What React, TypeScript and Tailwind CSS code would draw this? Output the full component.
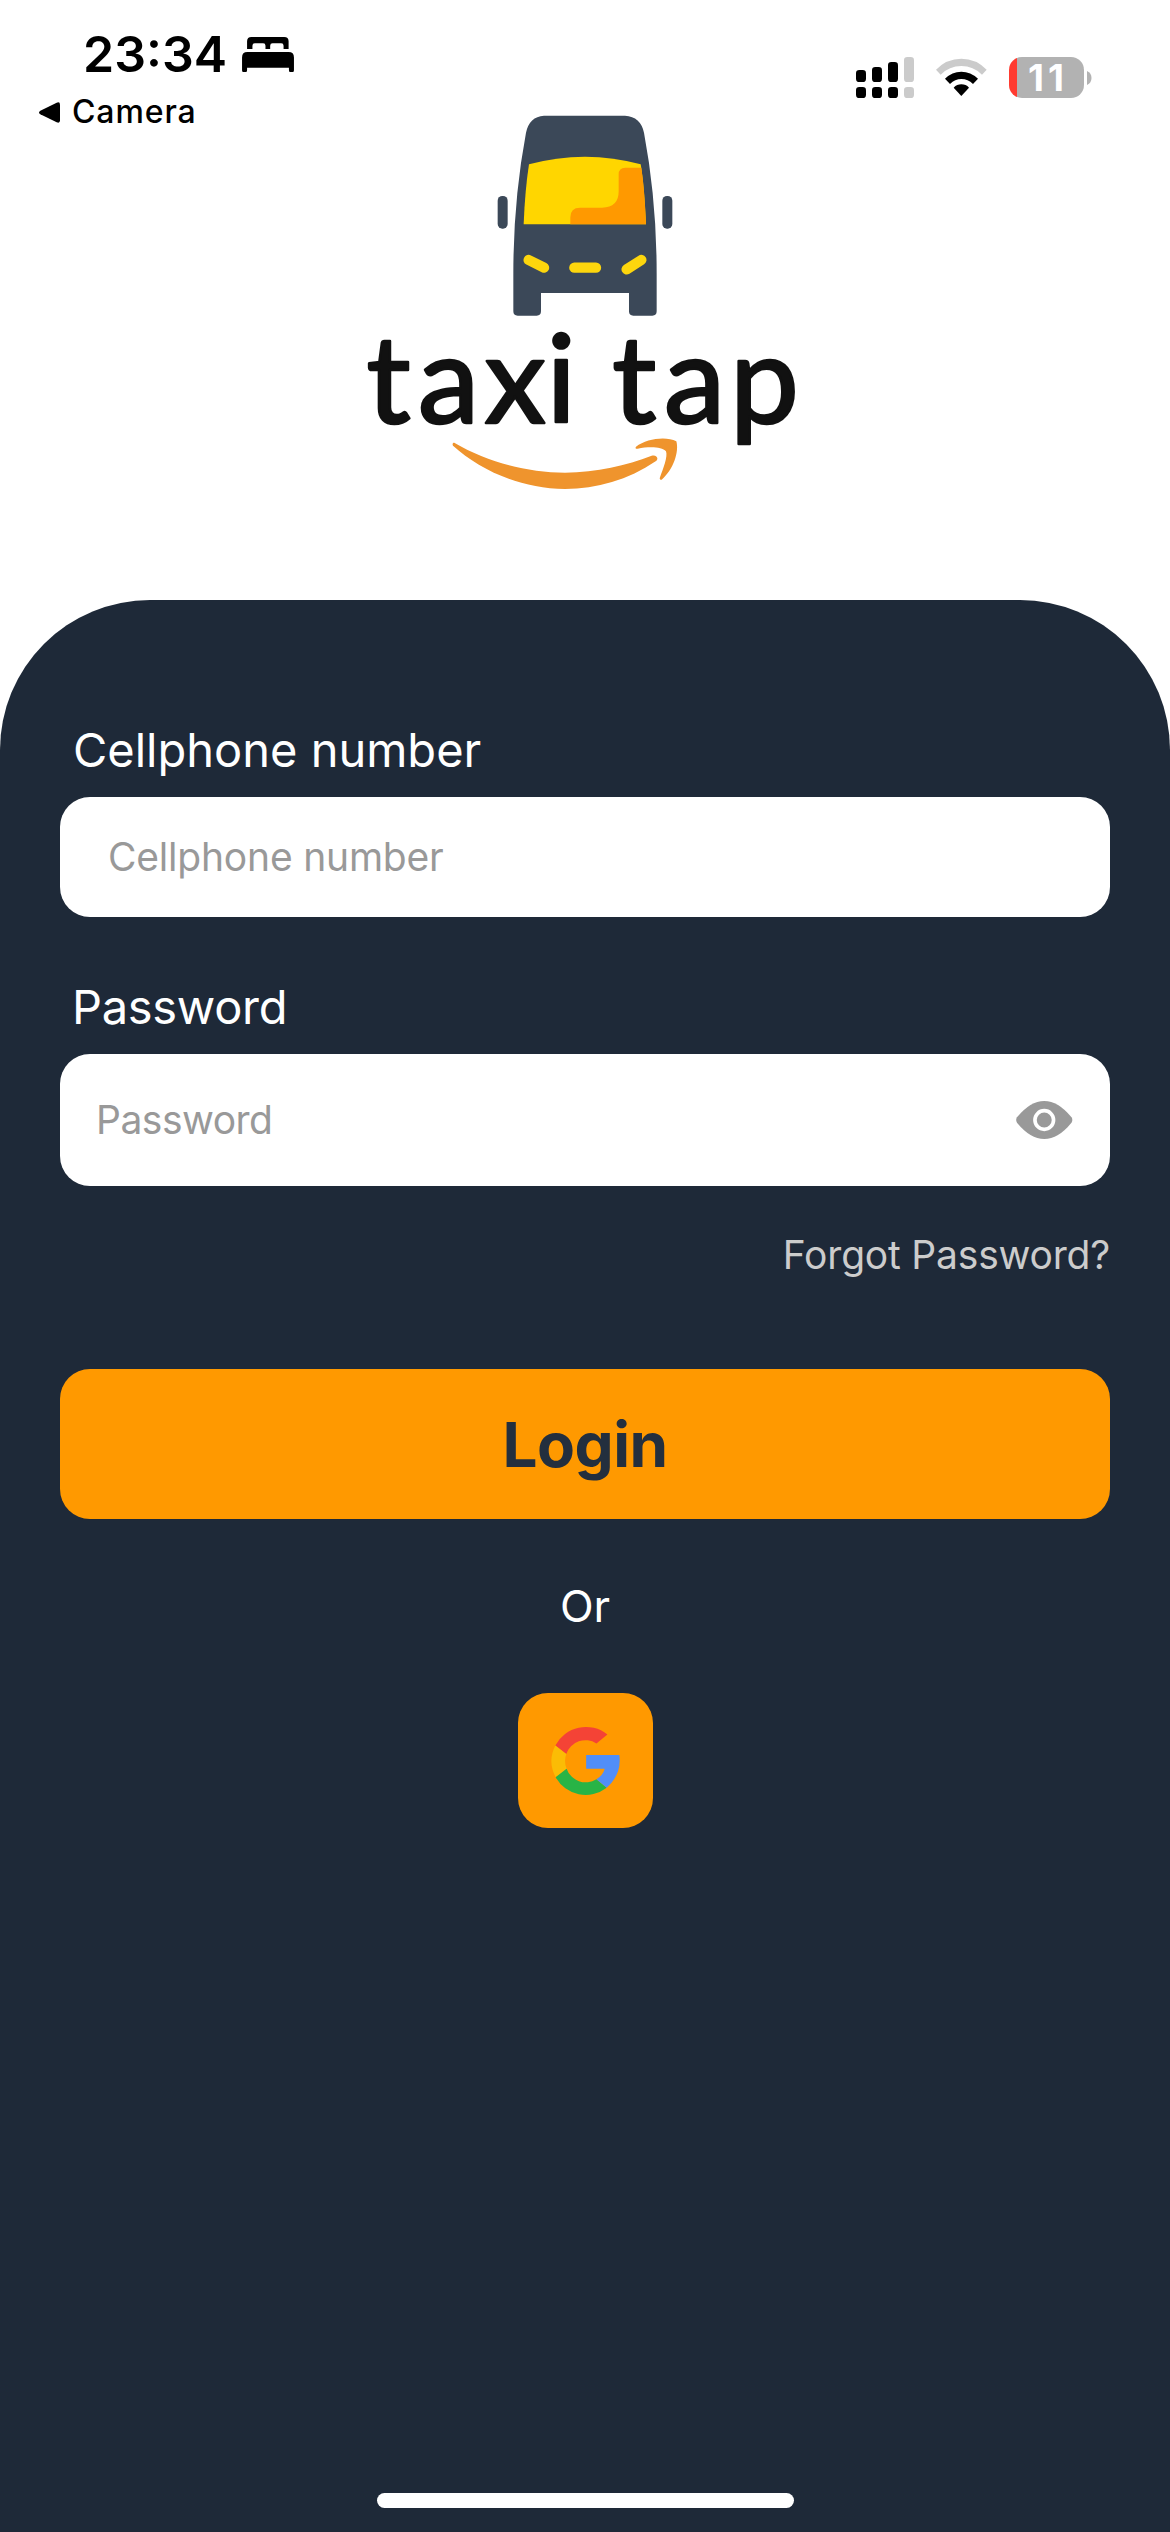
function BedIcon() {
  return (
    <svg viewBox="726 110 155 106" className="h-[35.5px] w-[52px]" fill="#000">
      <path d="M741 146V123Q741 110 754 110H852Q865 110 865 123V146H850V136Q850 129 843 129H817Q810 129 810 136V146H796V136Q796 129 789 129H764Q757 129 757 136V146Z" />
      <path d="M726 209V171Q726 155 742 155H865Q881 155 881 171V209Q881 216 873.500 216Q866 216 866 209V202H741V209Q741 216 733.500 216Q726 216 726 209Z" />
    </svg>
  );
}

function BackTriangle() {
  return (
    <svg viewBox="116 302 63 63" className="h-[21px] w-[21px]" fill="#000">
      <path d="M120 328L169 304Q179 300 179 310V357Q179 367 169 363L120 339Q112 333.500 120 328Z" />
    </svg>
  );
}

function SignalIcon() {
  return (
    <svg viewBox="108 81 174 123" className="h-[41px] w-[58px]">
      <g fill="#000">
        <rect x="108" y="120" width="30" height="36" rx="10" />
        <rect x="156" y="111" width="30" height="45" rx="10" />
        <rect x="204" y="96" width="30" height="60" rx="10" />
        <rect x="108" y="171" width="30" height="33" rx="10" />
        <rect x="156" y="171" width="30" height="33" rx="10" />
        <rect x="204" y="171" width="30" height="33" rx="10" />
      </g>
      <g fill="#cbcbcb">
        <rect x="252" y="81" width="30" height="75" rx="10" />
        <rect x="252" y="171" width="30" height="33" rx="10" />
      </g>
    </svg>
  );
}

function WifiIcon() {
  return (
    <svg viewBox="348 81 153 123" className="ml-[22px] h-[41px] w-[51px]">
      <path
        d="M348 119Q380 86 424 86Q468 86 500 119L486 134Q460 108 424 108Q388 108 362 134Z"
        fill="#cbcbcb"
      />
      <path d="M375 146Q396 125 424 125Q452 125 474 146L459 162Q444 147 424 147Q405 147 390 162Z" />
      <path d="M401 173Q411 163 424 163Q438 163 447 173L424 198Z" />
    </svg>
  );
}

function Battery() {
  return (
    <div className="ml-[22px] flex h-[41px] items-center">
      <div className="h-[41px] w-[75px] rounded-[13px] bg-[linear-gradient(to_right,#ff3b30_8px,#b2b2b2_8px)] pl-[19px] text-[37px] leading-[41px] font-bold tracking-[4px] text-white">
        11
      </div>
      <svg viewBox="0 0 5 14" className="ml-[3px] h-[14px] w-[5px]">
        <path d="M0 0Q4.500 2 4.500 7Q4.500 12 0 14Z" fill="#b2b2b2" />
      </svg>
    </div>
  );
}

function Logo() {
  return (
    <svg viewBox="350 100 470 400" className="mt-[100px] h-[400px] w-[470px]">
      <g transform="translate(480 100) scale(0.33333)">
        <path
          d="M192 47H435Q482 50 492 98Q530 300 530 520V634Q530 647 517 647H460Q447 647 447 634V579H183V634Q183 647 170 647H113Q100 647 100 634V520Q100 300 138 98Q148 50 192 47Z"
          fill="#3b4858"
        />
        <rect x="53" y="288" width="30" height="98" rx="14" fill="#3b4858" />
        <rect x="547" y="288" width="30" height="98" rx="14" fill="#3b4858" />
        <path d="M147 193Q230 170 315 170Q400 170 482 193Q492 250 498 373H131Q135 270 147 193Z" fill="#ffd600" />
        <path
          d="M484 203H436Q416 203 416 223V274Q416 323 366 323H300Q271 323 271 352V373H498Q494 270 484 203Z"
          fill="#ff9900"
        />
        <g stroke="#fdd60d" strokeWidth="31" strokeLinecap="round">
          <path d="M146 480L192 503" />
          <path d="M283 503H348" />
          <path d="M484 480L440 508" />
        </g>
      </g>
      <text
        x="366.500 418 484.500 546.500 590 612.300 664 730"
        y="422.500"
        fontSize="123"
        fill="#111"
        stroke="#111"
        strokeWidth="2.600"
        strokeLinejoin="round"
        className="font-['Lato',sans-serif]"
      >
        taxi tap
      </text>
      <g transform="translate(350 310) scale(0.33333)" fill="#ef942d">
        <path d="M314 399C410 455 530 488 645 488C740 487 830 466 905 437C920 433 928 446 917 454C835 510 740 537 645 537C510 535 390 480 309 407C306 402 309 397 314 399Z" />
        <path d="M858 410C890 386 948 378 979 394C988 425 970 480 935 509C930 511 928 508 930 502C940 475 954 440 948 424C935 409 895 410 863 416C857 417 855 414 858 410Z" />
      </g>
    </svg>
  );
}

function EyeIcon() {
  return (
    <svg viewBox="947 243 170 114" className="h-[38px] w-[56.500px]">
      <path
        d="M950 292Q990 243 1032 243Q1074 243 1114 292Q1119 300 1114 308Q1074 357 1032 357Q990 357 950 308Q945 300 950 292Z"
        fill="#999"
      />
      <circle cx="1032" cy="300" r="28" fill="none" stroke="#fff" strokeWidth="11" />
    </svg>
  );
}

function GoogleIcon() {
  return (
    <svg viewBox="154 168 208 210" className="h-[70px] w-[69px]">
      <path d="M167 226A104 104 0 0 1 324 193L291 220A61 61 0 0 0 200 252Z" fill="#f44336" />
      <path d="M167 226L200 252A62 62 0 0 0 201 296L168 322A104 104 0 0 1 167 226Z" fill="#fbbc05" />
      <path d="M168 322L201 296A61 61 0 0 0 291 328L322 354A104 104 0 0 1 168 322Z" fill="#28b446" />
      <path d="M322 354L291 328Q311 315 316 296H260V255H360Q368 312 322 354Z" fill="#518ef8" />
    </svg>
  );
}

export default function App() {
  return (
    <div className="flex h-[2532px] w-[1170px] flex-col overflow-hidden bg-white font-['Inter',sans-serif] text-black">
      <header className="grid h-[600px] shrink-0 grid-cols-[350px_470px_350px]">
        <div className="pt-[24px]">
          <div className="flex h-[60px] pl-[83px]">
            <span className="w-[159px] text-[50px] leading-[60px] font-semibold">23:34</span>
            <div className="pt-[12.500px]">
              <BedIcon />
            </div>
          </div>
          <div className="mt-[8px] flex items-center pl-[38.500px]">
            <BackTriangle />
            <span className="ml-[12.500px] text-[32px] leading-[40px] font-medium tracking-[0.900px]">Camera</span>
          </div>
        </div>
        <Logo />
        <div className="flex items-start pt-[57px] pl-[36px]">
          <SignalIcon />
          <WifiIcon />
          <Battery />
        </div>
      </header>

      <main className="flex flex-1 flex-col rounded-t-[150px] bg-[#1e2938] px-[60px] pt-[120px]">
        <label className="pl-[13px] text-[47px] leading-[60px] text-white">Cellphone number</label>
        <div className="mt-[17px] flex h-[120px] items-center rounded-[30px] bg-white pl-[48px] text-[39px] tracking-[-0.200px] text-[#999]">
          Cellphone number
        </div>

        <label className="mt-[60px] pl-[12px] text-[47px] leading-[60px] tracking-[-0.300px] text-white">Password</label>
        <div className="mt-[17px] flex h-[132px] items-center justify-between rounded-[30px] bg-white pr-[37.500px] pl-[36px] text-[39px] tracking-[-0.500px] text-[#999]">
          <span>Password</span>
          <EyeIcon />
        </div>

        <a className="mt-[44px] self-end text-[39px] leading-[50px] tracking-[-0.200px] text-[#ccc]">Forgot Password?</a>

        <button className="mt-[89px] h-[150px] rounded-[30px] bg-[#ff9900] text-[62px] font-bold tracking-[-0.500px] text-[#232f3e]">
          Login
        </button>

        <span className="mt-[57px] text-center text-[44px] leading-[60px] text-white">Or</span>

        <button className="mt-[57px] flex h-[135px] w-[135px] items-center justify-center self-center rounded-[30px] bg-[#ff9900]">
          <GoogleIcon />
        </button>

        <div className="mt-auto mb-[24px] h-[15px] w-[417px] self-center rounded-full bg-white" />
      </main>
    </div>
  );
}
